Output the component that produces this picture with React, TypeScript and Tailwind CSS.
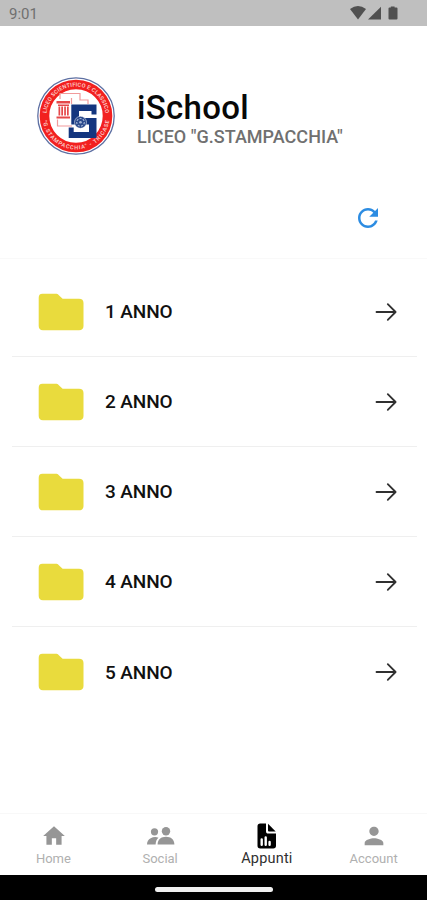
import type { ReactNode } from "react";

const years = ["1 ANNO", "2 ANNO", "3 ANNO", "4 ANNO", "5 ANNO"];

const SchoolLogo = () => (
  <svg viewBox="0 0 80 80" className="h-20 w-20 shrink-0" aria-label="Liceo Stampacchia">
    <circle cx="40" cy="40" r="38.2" fill="#fff" stroke="#5e70a3" strokeWidth="1.3" />
    <circle cx="40" cy="40" r="31.5" fill="none" stroke="#f2201f" strokeWidth="9.6" />
    <defs>
      <path id="ring-top" d="M10.500 40a29.500 29.500 0 0 1 59 0" />
      <path id="ring-bottom" d="M6.500 40a33.500 33.500 0 0 0 67 0" />
    </defs>
    <g fill="#fbc4c0" fontSize="5.6" fontWeight="700" textAnchor="middle">
      <text>
        <textPath href="#ring-top" startOffset="50%" textLength="87">
          LICEO SCIENTIFICO E CLASSICO
        </textPath>
      </text>
      <text>
        <textPath href="#ring-bottom" startOffset="50%" textLength="96">
          "G.STAMPACCHIA" - TRICASE
        </textPath>
      </text>
    </g>
    {/* pipework around the column */}
    <path
      d="M24 23v-5.500h20V24h8v4M35.500 22v6M21.500 43.500v6.500H36"
      fill="none"
      stroke="#f19a9b"
      strokeWidth="1.2"
    />
    <path
      d="M20.500 25h13.500v2.500H20.500zM22 28.500h11v1.500H22zM22.500 30.500h1.700v9h-1.700zM25.300 30.500H27v9h-1.700zM28.200 30.500h1.700v9h-1.700zM31 30.500h1.700v9H31zM20.500 40.500h13.500v2H20.500z"
      fill="#e5484a"
    />
    {/* big S */}
    <path
      d="M35.300 28.500H60.500v10h-5v-3.500H43v7h17.500V62H32.700V51.500h5v4.500H53v-7.500H35.300z"
      fill="#14367f"
    />
    <circle cx="44.500" cy="46.300" r="6" fill="#2b4a8c" stroke="#fff" strokeWidth="0.5" />
    <circle cx="44.500" cy="46.300" r="3.800" fill="none" stroke="#a3b4d4" strokeWidth="1.200" strokeDasharray="2 1.300" />
    <circle cx="44.500" cy="46.300" r="1.300" fill="#a3b4d4" />
  </svg>
);

const tabs: { label: string; active?: boolean; icon: ReactNode }[] = [
  {
    label: "Home",
    icon: (
      <svg viewBox="0 0 24 24" className="ml-px h-[26px] w-[26px]" fill="currentColor">
        <path d="M10 20v-6h4v6h5v-8h3L12 3 2 12h3v8z" />
      </svg>
    ),
  },
  {
    label: "Social",
    icon: (
      <svg viewBox="0 0 30 24" className="h-6 w-[30px]" fill="currentColor">
        <circle cx="9.500" cy="7.800" r="3.600" />
        <circle cx="21" cy="7.200" r="4.200" />
        <path d="M13.500 13.700C11 12.700 8 13 5.700 14.200 3.300 15.500 2 17.500 2 20.500h8.600c.2-3 1-5.200 2.900-6.800zM12.600 20.500c0-5 3.600-7.700 8.400-7.700s8.400 2.700 8.400 7.700z" />
      </svg>
    ),
  },
  {
    label: "Appunti",
    active: true,
    icon: (
      <svg viewBox="0 0 20 26" className="ml-px h-[26px] w-5" fill="currentColor">
        <path d="M3.200.5H9v7.800c0 1.500.7 2.300 2.300 2.300H19v12.200c0 1.700-1 2.700-2.700 2.700H3.200c-1.700 0-2.700-1-2.700-2.700V3.200C.5 1.500 1.500.5 3.200.5z" />
        <path d="M11 .8 18.700 8.500H12q-1 0-1-1z" />
        <path
          d="M4.700 16.500v5.300M8.700 14.500v7.300M12.600 19v2.800"
          stroke="#fff"
          strokeWidth="2.400"
          strokeLinecap="round"
        />
      </svg>
    ),
  },
  {
    label: "Account",
    icon: (
      <svg viewBox="0 0 24 24" className="ml-px h-7 w-7" fill="currentColor">
        <path d="M12 12c2.210 0 4-1.790 4-4s-1.790-4-4-4-4 1.790-4 4 1.790 4 4 4zm0 2c-2.670 0-8 1.340-8 4v2h16v-2c0-2.660-5.330-4-8-4z" />
      </svg>
    ),
  },
];

const StatusBar = () => (
  <div className="flex h-[26px] shrink-0 items-center justify-between bg-[#bfbfbf] pr-7 pl-[9px] text-[#505050]">
    <span className="pt-[3px] text-[15px] leading-none text-[#707070]">9:01</span>
    <svg viewBox="0 0 49 14" className="h-[14px] w-[49px]" fill="currentColor">
      <path d="M0 3Q8-3 16 3L8 13.500z" />
      <path d="M31 .8v12.700H18z" />
      <path d="M40.800 1.500V.5h3.800v1h1.900q1 0 1 1v10q0 1-1 1h-7q-1 0-1-1v-10q0-1 1-1z" />
    </svg>
  </div>
);

const App = () => {
  return (
    <div className="flex h-[900px] w-[427px] flex-col overflow-hidden bg-white font-['Roboto','Noto_Sans',sans-serif]">
      <StatusBar />

      <header className="h-[233px] shrink-0 border-b border-[#f9f9f9] pt-[50px]">
        <div className="flex items-start pl-9">
          <SchoolLogo />
          <div className="pt-3 pl-[21px]">
            <h1 className="text-[33px] leading-10 font-medium tracking-[0.3px] text-[#080808]">iSchool</h1>
            <p className="-mt-px text-[18px] leading-5 font-medium tracking-[0.02px] whitespace-nowrap text-[#707070]">
              LICEO "G.STAMPACCHIA"
            </p>
          </div>
        </div>
        <div className="flex justify-end pt-[47px] pr-[44px]">
          <button type="button" aria-label="Aggiorna">
            <svg viewBox="0 0 24 24" className="h-[30px] w-[30px]" fill="#2c8ce2">
              <path d="M17.650 6.350C16.200 4.900 14.210 4 12 4c-4.420 0-7.990 3.580-7.990 8s3.570 8 7.990 8c3.730 0 6.840-2.550 7.730-6h-2.080c-.82 2.330-3.040 4-5.650 4-3.310 0-6-2.690-6-6s2.690-6 6-6c1.660 0 3.140.69 4.220 1.780L13 11h7V4l-2.350 2.350z" />
            </svg>
          </button>
        </div>
      </header>

      <main className="flex-1 pt-2 pr-[10px] pl-3">
        {years.map((year) => (
          <div
            key={year}
            className="flex h-[90px] items-center border-b border-[#efefef] pr-5 pl-[26px] last:border-b-0"
          >
            <svg viewBox="0 0 46 38" className="h-[38px] w-[46px]" fill="#e9db3d">
              <path d="M4.500.8h13.200c1.200 0 2.100.3 2.900 1.100l4 3.800H41c3 0 4.500 1.500 4.500 4.400v23c0 2.700-1.500 4.200-4.500 4.200H5C2 37.300.7 35.800.7 33.100v-28C.7 2.300 1.700.8 4.500.8z" />
            </svg>
            <span className="pt-[2px] pl-[21px] text-[19px] font-medium tracking-[-0.1px] text-[#101010]">{year}</span>
            <svg
              viewBox="0 0 22 20"
              className="ml-auto h-5 w-[22px]"
              fill="none"
              stroke="#303030"
              strokeWidth="1.8"
              strokeLinecap="round"
              strokeLinejoin="round"
            >
              <path d="M1.500 10h19M12.800 2.200l7.800 7.800-7.800 7.800" />
            </svg>
          </div>
        ))}
      </main>

      <nav className="grid h-[62px] shrink-0 grid-cols-4 border-t border-[#f8f8f8]">
        {tabs.map(({ label, active, icon }) => (
          <a
            key={label}
            href="#"
            className={[
              "flex flex-col items-center",
              active ? "text-black" : "text-[#969696]",
            ].join(" ")}
          >
            <span className="flex h-[35px] items-center pt-[8px]">{icon}</span>
            <span
              className={[
                "leading-4",
                active
                  ? "pt-[2px] text-[14.500px] tracking-[0.2px] text-[#303030]"
                  : "pt-[2px] text-[13px] text-[#b0b0b0]",
              ].join(" ")}
            >
              {label}
            </span>
          </a>
        ))}
      </nav>

      <div className="flex h-[25px] shrink-0 items-center justify-center bg-black pt-[3px]">
        <div className="h-[5px] w-[118px] rounded-full bg-[#f0f0f0]" />
      </div>
    </div>
  );
};

export default App;
